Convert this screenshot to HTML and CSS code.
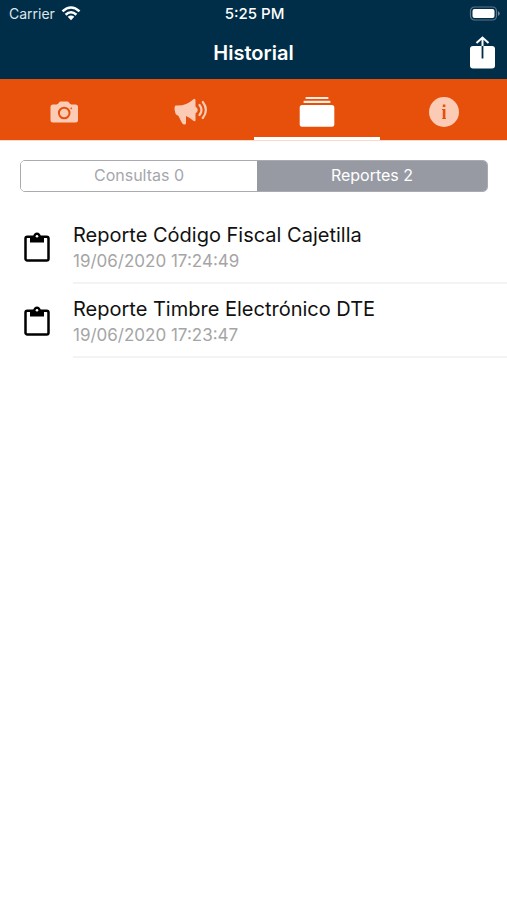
FILE: index.html
```html
<!DOCTYPE html>
<html lang="es">
<head>
<meta charset="utf-8">
<meta name="viewport" content="width=device-width, initial-scale=1">
<title>Historial</title>
<link rel="stylesheet" href="styles.css">
</head>
<body>
<header class="header">
  <div class="status">
    <div class="carrier">
      <span>Carrier</span>
      <svg width="20" height="16" viewBox="0 0 20 16" aria-hidden="true">
        <g fill="none" stroke="#fff" stroke-width="2.6">
          <path d="M1.5 5.400Q10-2.400 18.500 5.400"/>
          <path d="M4.600 8.700Q10 3.800 15.400 8.700"/>
        </g>
        <path d="M6.700 10.800Q10 8 13.300 10.800L10 14.200Z" fill="#fff"/>
      </svg>
    </div>
    <time class="clock">5:25 PM</time>
    <svg class="battery" width="31" height="16" viewBox="0 0 31 16" aria-hidden="true">
      <rect x="1.500" y="1" width="26" height="13" rx="4" fill="none" stroke="#5d768a" stroke-width="1.200"/>
      <rect x="3.500" y="3" width="22" height="9" rx="2" fill="#fff"/>
      <path d="M29 5Q32.500 7.500 29 10Z" fill="#70879a"/>
    </svg>
  </div>
  <div class="titlebar">
    <h1 class="title">Historial</h1>
    <button class="share" type="button" aria-label="Compartir">
      <svg width="26" height="34" viewBox="0 0 26 34" aria-hidden="true">
        <rect x="1" y="10" width="25" height="22.500" rx="3" fill="#fff"/>
        <path d="M13.500 10V22.500" stroke="#002d47" stroke-width="1.800"/>
        <path d="M13.500 10V1.500M7.500 7L13.500 1.500L19.500 7" fill="none" stroke="#fff" stroke-width="2"/>
      </svg>
    </button>
  </div>
</header>
<nav class="tabs">
  <a class="tab" href="#camara" aria-label="Cámara">
    <svg width="28" height="24" viewBox="0 0 28 24" aria-hidden="true">
      <path d="M3 4.500H6.500Q8 4.500 9 2.500Q9.500 1.500 11 1.500H17Q18.500 1.500 19 2.500Q20 4.500 21.500 4.500H25.500Q28 4.500 28 7V20Q28 22.500 25.500 22.500H3Q0.500 22.500 0.500 20V7Q0.500 4.500 3 4.500Z" fill="#fccbb5"/>
      <circle cx="14.200" cy="13" r="5.300" fill="none" stroke="#e6500b" stroke-width="2"/>
      <circle cx="21.300" cy="8.300" r="0.900" fill="#e6500b"/>
    </svg>
  </a>
  <a class="tab" href="#denuncias" aria-label="Denuncias">
    <svg width="34" height="28" viewBox="0 0 34 28" aria-hidden="true">
      <path d="M1.500 7.500Q11.500 8.500 19.500 1.200Q21.300 0 21.500 2.500V8.500Q26 12 21.500 15.500V22Q21.300 24.200 19 22.500Q16 19.500 12 18V25Q12 26.500 10.500 26.500Q9 26.500 8 25L4.500 18L1.800 16.300Q1 14 .5 11Q.3 8.500 1.500 7.500Z" fill="#fccbb5"/>
      <path d="M25.500 7Q29.500 12 25.500 17M28.800 4Q35 12 28.800 20" fill="none" stroke="#fccbb5" stroke-width="2.200" stroke-linecap="round"/>
    </svg>
  </a>
  <a class="tab active" href="#historial" aria-label="Historial" aria-current="page">
    <svg width="36" height="32" viewBox="0 0 36 32" aria-hidden="true">
      <path d="M7.500 2H28.500M5.500 5.900H30.500" stroke="#ffece3" stroke-width="2.200" stroke-linecap="round"/>
      <rect x="0.700" y="9" width="34.600" height="21.800" rx="2.500" fill="#fff"/>
    </svg>
  </a>
  <a class="tab" href="#informacion" aria-label="Información">
    <svg width="30" height="30" viewBox="0 0 30 30" aria-hidden="true">
      <circle cx="15" cy="15" r="15" fill="#fccbb5"/>
      <path d="M13.800 7.500H16.400V10H13.800ZM13 12H16.400V21H17V22H13.200V21H13.800V13H13Z" fill="#e6500b"/>
    </svg>
  </a>
</nav>
<main class="content">
  <div class="segments">
    <button class="segment" type="button" aria-pressed="false">Consultas 0</button>
    <button class="segment selected" type="button" aria-pressed="true">Reportes 2</button>
  </div>
  <ul class="reports">
    <li class="report">
      <svg class="clipboard" width="26" height="30" viewBox="0 0 26 30" aria-hidden="true">
        <rect x="1.500" y="4.700" width="23" height="23.800" rx="1.800" fill="none" stroke="#000" stroke-width="2.500"/>
        <path d="M6 4H9.200Q10 .5 13 .5Q16 .5 16.800 4H20V10.500H6Z"/>
        <circle cx="13" cy="4.300" r="1.300" fill="#fff"/>
      </svg>
      <div class="details">
        <h2 class="name">Reporte Código Fiscal Cajetilla</h2>
        <time class="date">19/06/2020 17:24:49</time>
      </div>
    </li>
    <li class="report">
      <svg class="clipboard" width="26" height="30" viewBox="0 0 26 30" aria-hidden="true">
        <rect x="1.500" y="4.700" width="23" height="23.800" rx="1.800" fill="none" stroke="#000" stroke-width="2.500"/>
        <path d="M6 4H9.200Q10 .5 13 .5Q16 .5 16.800 4H20V10.500H6Z"/>
        <circle cx="13" cy="4.300" r="1.300" fill="#fff"/>
      </svg>
      <div class="details">
        <h2 class="name">Reporte Timbre Electrónico DTE</h2>
        <time class="date">19/06/2020 17:23:47</time>
      </div>
    </li>
  </ul>
</main>
</body>
</html>
```

FILE: styles.css
```css
* {
  box-sizing: border-box;
}

body {
  margin: 0;
  background: #fff;
  color: #111;
  font-family: Inter, "Liberation Sans", sans-serif;
}

svg {
  display: block;
}

.header {
  background: #002d47;
  color: #fff;
}

.status,
.titlebar {
  display: grid;
  grid-template-columns: 1fr auto 1fr;
  align-items: center;
}

.status {
  height: 27px;
  padding: 0 7px 0 9px;
  font-size: 14px;
}

.carrier {
  display: flex;
  align-items: center;
  gap: 6px;
  color: #dfe6ea;
}

.clock {
  font-size: 15px;
  font-weight: 500;
}

.battery {
  justify-self: end;
}

.titlebar {
  height: 52px;
  padding: 0 12px;
}

.title {
  grid-column: 2;
  margin: 0;
  font-size: 20px;
  font-weight: 600;
}

.share {
  justify-self: end;
  padding: 0;
  border: 0;
  background: none;
}

.tabs {
  display: grid;
  grid-template-columns: repeat(4, 1fr);
  height: 62px;
  background: #e6500b;
  border-bottom: 1px solid #fbd9c8;
}

.tab {
  display: flex;
  align-items: center;
  justify-content: center;
  padding: 7px 0 0 1px;
  border-bottom: 3px solid transparent;
}

.active {
  border-bottom-color: #fff;
}

.segments {
  display: flex;
  height: 32px;
  margin: 19px 19px 0 20px;
  border: 1px solid #a9abb0;
  border-radius: 5px;
  overflow: hidden;
}

.segment {
  flex: 236 1 0;
  padding: 0 0 2px;
  border: 0;
  background: #fff;
  color: #a5a7ac;
  font-family: inherit;
  font-size: 16px;
}

.selected {
  flex-grow: 230;
  background: #979aa3;
  color: #fff;
}

.reports {
  margin: 18px 0 0;
  padding: 0;
  list-style: none;
}

.report {
  display: flex;
  align-items: center;
  gap: 23px;
  padding-left: 24px;
}

.clipboard {
  flex: none;
}

.details {
  flex: 1;
  padding: 12px 0 8px;
  border-bottom: 2px solid #f3f3f3;
}

.name {
  margin: 0;
  font-size: 20px;
  font-weight: 400;
  line-height: 26px;
}

.date {
  display: block;
  color: #a5a5a5;
  font-size: 17px;
  line-height: 26px;
}
```
